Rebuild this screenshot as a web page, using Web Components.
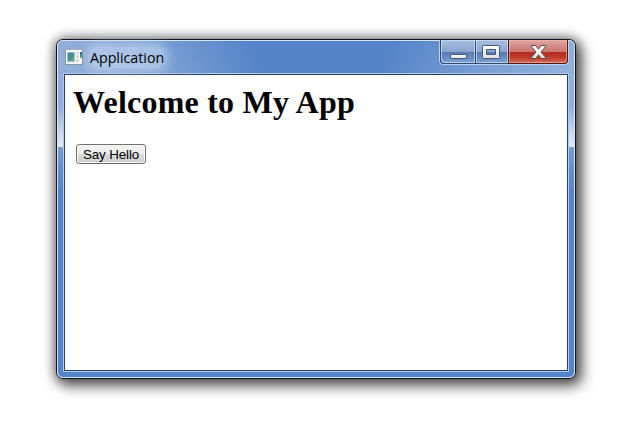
<!DOCTYPE html>
<html lang="en"><head><meta charset="utf-8"><title>Application</title>
<style>html,body{margin:0;background:#fff}body{width:641px;height:428px;overflow:hidden}</style></head>
<body>
<app-window><window-title slot="title">Application</window-title><window-controls slot="controls"></window-controls>
<welcome-page></welcome-page></app-window>
<script>
const define = (name, html) => customElements.define(name, class extends HTMLElement {
  constructor() { super(); this.attachShadow({mode: 'open'}).innerHTML = html; }
});

define('app-window', `<style>
:host{display:block;box-sizing:border-box;padding:39px 65px 49px 56px}
.frame{box-sizing:border-box;width:520px;height:340px;border:1px solid #10131f;border-radius:7px;
 box-shadow:4px 5px 14px 2px rgba(0,0,0,.6),0 0 11px 2px rgba(0,0,0,.36);background:#c4d6ef}
.glass{box-sizing:border-box;width:518px;height:338px;border:1px solid #d5e3f5;border-radius:6px;padding:0 6px 6px 5px;
 display:flex;flex-direction:column;
 background:
 linear-gradient(65deg,rgba(150,178,220,.95) 0,rgba(145,175,219,.8) 80px,transparent 190px) no-repeat 0 0/260px 34px,
 linear-gradient(-65deg,rgba(150,180,222,.95) 0,rgba(140,172,219,.75) 75px,transparent 180px) no-repeat 100% 0/230px 34px,
 linear-gradient(#5383c8,#5383c8) no-repeat 0 0/100% 34px,
 linear-gradient(#92b0de 0,#92b0de 66px,#d4e1f3 98px,#dce7f6 106px,#759bd2 106px,#5383c8 150px,#5383c8)}
header{height:32px;flex:none;display:flex;align-items:flex-start;justify-content:space-between;margin-right:-1px}
.client{flex:1;min-height:0;border:1px solid #2c405f;background:#fff;box-shadow:0 0 0 1px #b5cbec;margin:1px 0 0 1px}
</style><div class="frame"><div class="glass"><header><slot name="title"></slot><slot name="controls"></slot></header><div class="client"><slot></slot></div></div></div>`);

define('window-title', `<style>
:host{display:flex;align-items:center;gap:6px;height:32px;padding-left:1px;font:14.5px/20px "Open Sans","Noto Sans",sans-serif;color:#000}
span{display:block;transform:scaleX(.98);transform-origin:0 50%;padding-top:1px;border-radius:8px;background:rgba(200,218,243,.55);box-shadow:0 0 9px 4px rgba(200,218,243,.55)}
svg{display:block;position:relative;z-index:1}
</style><svg width="20" height="18" viewBox="0 0 20 18" shape-rendering="crispEdges">
<path fill="#8d9297" d="M1 1h18v16H1z"/><path fill="#f6f7f6" d="M2 2h16v14H2z"/><path fill="#a4abb0" d="M1 1h18v1H1z"/>
<defs><linearGradient id="p" x2="1" y2="1"><stop stop-color="#4a76ad"/><stop offset=".55" stop-color="#459889"/><stop offset="1" stop-color="#62b58a"/></linearGradient><linearGradient id="q" x2="0" y2="1"><stop stop-color="#285baa"/><stop offset="1" stop-color="#56ae72"/></linearGradient></defs>
<path fill="#a7c0c0" d="M3 4h8v10H3z"/><path fill="url(#p)" d="M4 5h6v8H4z"/><path fill="#d4d8d8" d="M12 4h3v2h-3zM12 7h3v3h-3zM12 11h3v3h-3z"/><path fill="url(#q)" d="M16 4h2v6h-2z"/></svg><span><slot></slot></span>`);

define('window-controls', `<style>
:host{display:block;margin-top:-1px}svg{display:block}
</style><svg width="130" height="25" viewBox="-1 0 130 25">
<defs>
<linearGradient id="b" x2="0" y2="1"><stop stop-color="#a8bfe0"/><stop offset=".5" stop-color="#8ba6d0"/><stop offset=".51" stop-color="#5478ad"/><stop offset="1" stop-color="#7da2d8"/></linearGradient>
<linearGradient id="r" x2="0" y2="1"><stop stop-color="#dda6a4"/><stop offset=".5" stop-color="#cb7670"/><stop offset=".51" stop-color="#b02a1e"/><stop offset=".75" stop-color="#bd3a2a"/><stop offset="1" stop-color="#d07060"/></linearGradient>
<linearGradient id="g" x2="0" y2="1"><stop stop-color="#fff"/><stop offset="1" stop-color="#dedede"/></linearGradient>
</defs>
<path fill="none" stroke="#bed2ef" d="M-.5 0v20q0 4.500 4.500 4.500h120q4.500 0 4.500-4.500V0"/>
<path fill="#34496e" d="M0 0h68v24H4q-4 0-4-4z"/><path fill="#541712" d="M68 0h60v20q0 4-4 4H68z"/>
<path fill="url(#b)" d="M1 0h34v23H4q-3 0-3-3zM36 0h32v23H36z"/><path fill="url(#r)" d="M69 0h58v20q0 3-3 3H69z"/>
<path fill="none" stroke="#d2e0f5" stroke-opacity=".7" d="M1.500 0v19q0 3.500 3.500 3.500h29.500V0M36.500 0v22.500h31V0M1 .5h67"/>
<path fill="none" stroke="#f2b8ac" stroke-opacity=".6" d="M69.500 0v22.500H123q3.500 0 3.500-3.500V0M69 .5h58"/>
<rect x="10.500" y="14.500" width="16" height="4" rx=".5" fill="url(#g)" stroke="#495a77"/>
<path fill="url(#g)" fill-rule="evenodd" stroke="#495a77" d="M43 5.500h15.500q1 0 1 1v11q0 1-1 1H43q-.5 0-.5-1v-11q0-1 .5-1zM46.500 9.500v5h9v-5z"/>
<path fill="url(#g)" stroke="#59424a" stroke-linejoin="round" d="M91.500 5.500h4.200l2.800 3.600 2.800-3.600h4.200v1.200l-4.500 5.300 4.500 5.300v1.200h-4.200l-2.800-3.600-2.800 3.600h-4.200v-1.200l4.500-5.300-4.500-5.300z"/>
</svg>`);

define('welcome-page', `<style>
:host{display:block;padding:9px 8px 0;color:#000}
h1{margin:0;font:bold 32px/37px "Liberation Serif","Times New Roman",serif;letter-spacing:.22px;white-space:nowrap}
say-button{margin:23px 0 0 3px}
</style><h1>Welcome to My App</h1><say-button>Say Hello</say-button>`);

define('say-button', `<style>
:host{display:block}
button{display:block;box-sizing:border-box;width:70px;height:20px;padding:1px 0 0;border:1px solid #707070;border-radius:3px;
 font:13.33px/17px "Liberation Sans",Arial,sans-serif;letter-spacing:-.1px;color:#000;white-space:nowrap;
 background:linear-gradient(#f3f3f3,#ebebeb 50%,#dcdcdc 50%,#cecece);box-shadow:inset 0 0 0 1px #fafafa}
</style><button><slot></slot></button>`);
</script></body></html>
